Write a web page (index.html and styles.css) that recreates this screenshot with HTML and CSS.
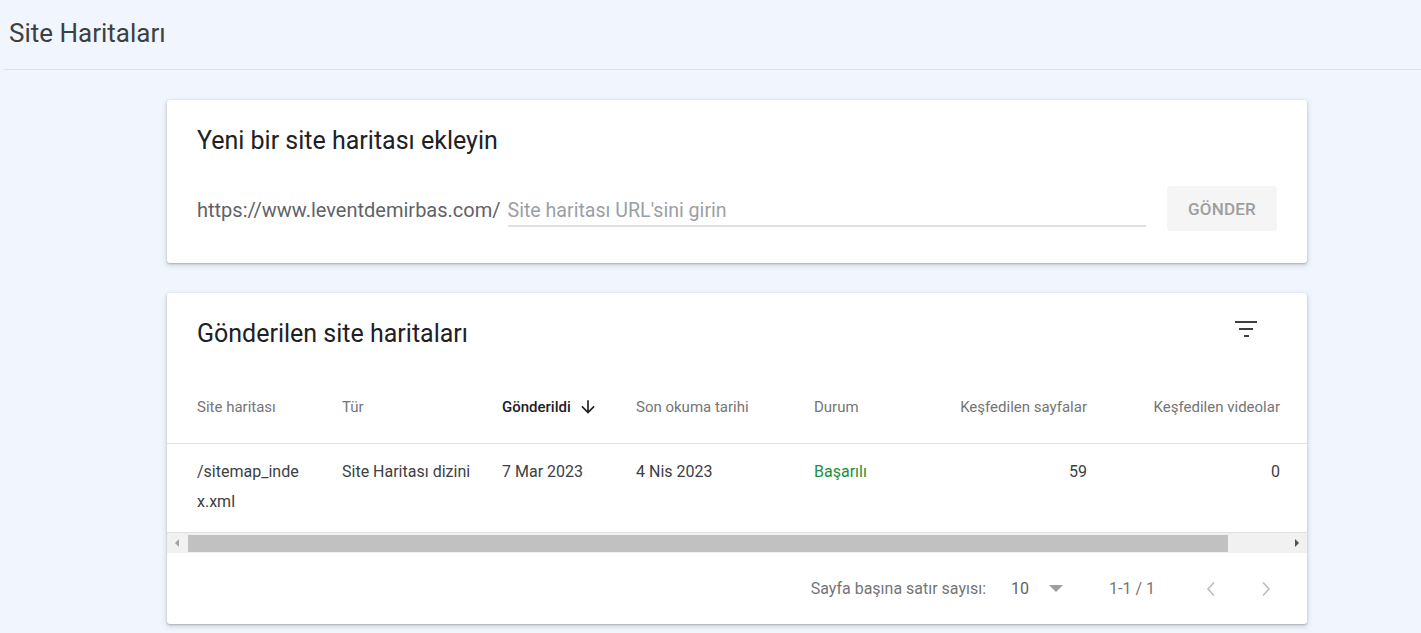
FILE: index.html
```html
<!DOCTYPE html>
<html lang="tr">
<head>
<meta charset="utf-8">
<title>Site Haritaları</title>
<link rel="stylesheet" href="styles.css">
</head>
<body>
<header class="page-header">
  <h1 class="page-title">Site Haritaları</h1>
</header>
<main class="content">
  <section class="card add-card">
    <h2 class="card-title">Yeni bir site haritası ekleyin</h2>
    <div class="add-row">
      <span class="url-prefix">https://www.leventdemirbas.com/</span>
      <input class="url-input" type="text" placeholder="Site haritası URL'sini girin">
      <button class="submit-btn" type="button">GÖNDER</button>
    </div>
  </section>

  <section class="card list-card">
    <div class="list-head">
      <h2 class="card-title">Gönderilen site haritaları</h2>
      <svg class="filter-icon" width="24" height="24" viewBox="0 0 24 24" aria-hidden="true">
        <rect x="1" y="4" width="22" height="2"/>
        <rect x="5" y="11" width="14" height="2"/>
        <rect x="10" y="18" width="5" height="2"/>
      </svg>
    </div>
    <div class="table">
      <div class="row head-row">
        <div class="cell">Site haritası</div>
        <div class="cell">Tür</div>
        <div class="cell sorted">Gönderildi
          <svg class="sort-icon" width="20" height="20" viewBox="0 0 24 24" aria-hidden="true"><path d="M20 12l-1.41-1.41L13 16.17V4h-2v12.17l-5.58-5.59L4 12l8 8 8-8z"/></svg>
        </div>
        <div class="cell">Son okuma tarihi</div>
        <div class="cell">Durum</div>
        <div class="cell num">Keşfedilen sayfalar</div>
        <div class="cell num">Keşfedilen videolar</div>
      </div>
      <div class="row data-row">
        <div class="cell"><span class="path">/sitemap_index.xml</span></div>
        <div class="cell">Site Haritası dizini</div>
        <div class="cell">7 Mar 2023</div>
        <div class="cell">4 Nis 2023</div>
        <div class="cell status-ok">Başarılı</div>
        <div class="cell num">59</div>
        <div class="cell num">0</div>
      </div>
    </div>
    <div class="hscroll">
      <div class="hs-btn"><span class="tri tri-left"></span></div>
      <div class="hs-thumb"></div>
      <div class="hs-fill"></div>
      <div class="hs-btn"><span class="tri tri-right"></span></div>
    </div>
    <div class="pager">
      <span class="pager-label">Sayfa başına satır sayısı:</span>
      <span class="pager-select">10
        <svg class="drop-icon" width="14" height="7" viewBox="0 0 14 7" aria-hidden="true"><path d="M0 0h14L7 7z"/></svg>
      </span>
      <span class="pager-range">1-1 / 1</span>
      <svg class="chev chev-left" width="24" height="24" viewBox="0 0 24 24" aria-hidden="true"><polyline points="15,5.5 9,12 15,18.5"/></svg>
      <svg class="chev chev-right" width="24" height="24" viewBox="0 0 24 24" aria-hidden="true"><polyline points="9,5.5 15,12 9,18.5"/></svg>
    </div>
  </section>
</main>
</body>
</html>
```

FILE: styles.css
```css
* { box-sizing: border-box; }

html, body {
  margin: 0;
  padding: 0;
  background: #f1f5fd;
  font-family: Roboto, "Liberation Sans", Arial, sans-serif;
  color: #202124;
}

body {
  height: 633px;
  overflow: hidden;
}

.page-header {
  margin-left: 4px;
  padding: 17px 0 20px 5px;
  border-bottom: 1px solid #dde1e8;
}

.page-title {
  margin: 0;
  font-size: 26px;
  line-height: 32px;
  font-weight: 400;
  color: #3c4043;
}

.content {
  padding: 30px 114px 0 167px;
}

.card {
  background: #fff;
  border-radius: 3px;
  box-shadow: 0 1px 2px rgba(60, 64, 67, 0.3), 0 2px 5px 1px rgba(60, 64, 67, 0.15);
}

.add-card {
  padding: 25px 30px 32px 30px;
  margin-bottom: 30px;
}

.card-title {
  margin: 0;
  font-size: 25px;
  line-height: 32px;
  font-weight: 400;
  color: #202124;
}

.add-row {
  display: flex;
  align-items: center;
  height: 45px;
  margin-top: 29px;
}

.url-prefix {
  font-size: 20px;
  line-height: 24px;
  padding-top: 2px;
  color: #5f6368;
  white-space: nowrap;
}

.url-input {
  flex: 1;
  height: 36px;
  margin-left: 7px;
  padding: 5px 0 0 0;
  border: none;
  border-bottom: 2px solid #e0e0e0;
  outline: none;
  background: transparent;
  font-family: inherit;
  font-size: 19.6px;
  color: #202124;
}

.url-input::placeholder {
  color: #9aa0a6;
}

.submit-btn {
  width: 110px;
  height: 45px;
  margin-left: 21px;
  border: none;
  border-radius: 4px;
  background: #f5f5f5;
  font-family: inherit;
  font-size: 17px;
  font-weight: 500;
  color: #9e9e9e;
  letter-spacing: 0.2px;
}

.list-card {
  overflow: hidden;
}

.list-head {
  display: flex;
  justify-content: space-between;
  align-items: flex-start;
  padding: 25px 49px 21px 30px;
}

.filter-icon {
  display: block;
  margin-top: -1px;
  fill: #3c4043;
}

.row {
  display: grid;
  grid-template-columns: 145px 160px 134px 178px 120px 153px 193px;
  padding: 0 27px 0 30px;
  border-bottom: 1px solid #e0e0e0;
}

.head-row {
  height: 73px;
  align-items: center;
  font-size: 15px;
  color: #757575;
}

.cell {
  white-space: nowrap;
}

.num {
  text-align: right;
}

.sorted {
  display: flex;
  align-items: center;
  color: #202124;
  font-weight: 500;
}

.sort-icon {
  margin-left: 7px;
  fill: #202124;
}

.data-row {
  padding-top: 13px;
  padding-bottom: 15px;
  font-size: 16px;
  line-height: 30px;
  color: #3c4043;
}

.path {
  display: block;
  width: 108px;
  white-space: normal;
  word-break: break-all;
}

.status-ok {
  color: #1e8e3e;
}

.hscroll {
  display: flex;
  height: 20px;
  background: #f1f1f1;
}

.hs-btn {
  width: 21px;
  display: flex;
  align-items: center;
  justify-content: center;
}

.hs-thumb {
  width: 1040px;
  height: 17px;
  margin-top: 2px;
  background: #c1c1c1;
}

.hs-fill {
  flex: 1;
}

.tri {
  width: 0;
  height: 0;
  border-top: 4px solid transparent;
  border-bottom: 4px solid transparent;
}

.tri-left {
  border-right: 4px solid #a3a3a3;
  margin-left: -1px;
}

.tri-right {
  border-left: 4px solid #505050;
  margin-left: 1px;
}

.pager {
  display: flex;
  justify-content: flex-end;
  align-items: center;
  height: 71px;
  padding-right: 29px;
  font-size: 16px;
  color: #757575;
}

.pager-label {
  margin-right: 25px;
}

.pager-select {
  display: flex;
  align-items: center;
  color: #5f6368;
}

.drop-icon {
  margin-left: 20px;
  fill: #9e9e9e;
}

.pager-range {
  margin-left: 46px;
}

.chev {
  fill: none;
  stroke: #bdbdbd;
  stroke-width: 1.6;
}

.chev-left {
  margin-left: 44px;
}

.chev-right {
  margin-left: 31px;
}
```
